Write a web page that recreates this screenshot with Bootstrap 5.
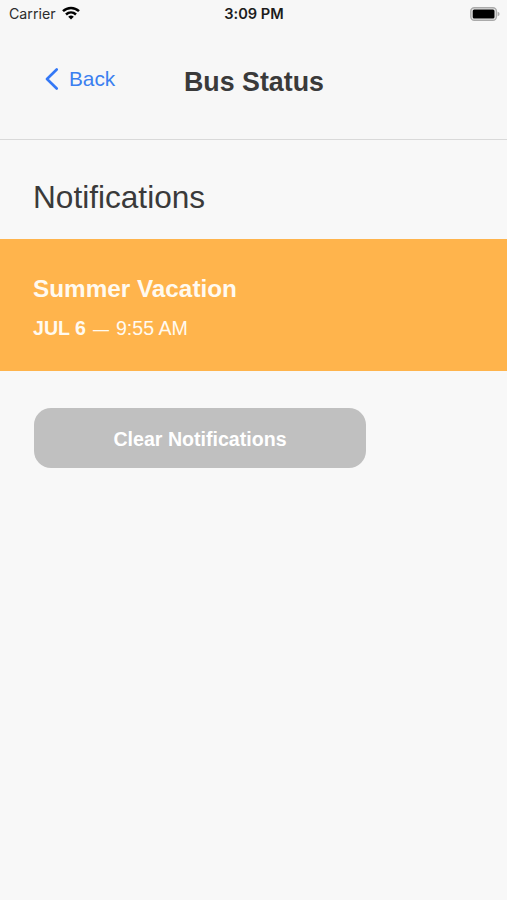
<!DOCTYPE html>
<html lang="en">
<head>
<meta charset="utf-8">
<meta name="viewport" content="width=device-width, initial-scale=1">
<title>Bus Status</title>
<link href="https://cdn.jsdelivr.net/npm/bootstrap@5.3.0/dist/css/bootstrap.min.css" rel="stylesheet">
<style>
  body { background: #f8f8f8; color: #3a3a3a; font-family: "Liberation Sans", Arial, sans-serif; font-variant-ligatures: none; min-height: 100vh; }
  .app-head { height: 140px; background: #f7f7f7; border-bottom: 1px solid #d9d9d9; }
  .status-bar { height: 28px; padding: 0 7px 0 9px; font-family: Inter, sans-serif; color: #1c1c1c; display: grid; grid-template-columns: 1fr auto 1fr; }
  .carrier { font-size: 14.2px; color: #2c2c2c; }
  .signal { margin-left: 6px; margin-top: -2px; }
  .clock { font-size: 14.6px; font-weight: 600; padding-top: 2px; margin-left: -1px; }
  .title-bar { padding: 35px 0 0 45px; }
  .back-link { width: 139px; height: 32px; font-size: 20.8px; line-height: 32px; color: #3b7ff0; }
  .back-label { margin-left: 10px; }
  .page-title { font-size: 26.8px; line-height: 38px; }
  .section-title { font-size: 31.6px; line-height: 40px; padding: 37px 33px 22px; }
  .notice { height: 132px; background: #ffb44c; color: #fffaf0; padding: 35px 33px 0; }
  .notice-title { font-size: 24.3px; line-height: 30px; }
  .notice-time { font-size: 19.6px; line-height: 26px; margin-top: 11px; }
  .dash { display: inline-block; width: 19px; text-align: center; font-size: 16px; }
  .clear-btn, .clear-btn:hover { width: 332px; height: 60px; margin: 37px 0 0 34px; padding-top: 9px; border: 0; border-radius: 17px; background: #c0c0c0; color: #fff; font-size: 19.6px; }
</style>
</head>
<body>
<header class="app-head">
  <div class="status-bar align-items-center">
    <div class="d-flex align-items-center">
      <span class="carrier">Carrier</span>
      <svg class="signal" width="18" height="14" viewBox="0 0 18 14" fill="none" stroke="#000" stroke-width="2.5" aria-hidden="true">
        <path d="M1 5.2C5.6.9 12.400 .9 17 5.200M4 8.500C6.900 5.800 11.100 5.800 14 8.500"/>
        <path d="M6.200 10.700Q9 8.400 11.800 10.700L9 13.600Z" fill="#000" stroke="none"/>
      </svg>
    </div>
    <span class="clock">3:09 PM</span>
    <svg class="ms-auto" width="30" height="14" viewBox="0 0 30 14" aria-hidden="true">
      <rect x=".8" y=".8" width="25.600" height="12.400" rx="3.500" fill="#e8e8e8" stroke="#aaa" stroke-width="1.400"/>
      <rect x="2.700" y="2.600" width="21.800" height="8.900" rx="1.500" fill="#000"/>
      <path d="M27.600 4.700q2 .6 2 2.300t-2 2.300z" fill="#aaa"/>
    </svg>
  </div>
  <nav class="title-bar d-flex align-items-start">
    <a class="back-link d-flex align-items-center text-decoration-none" href="#">
      <svg width="14" height="22" viewBox="0 0 14 22" fill="none" stroke="#3478f6" stroke-width="2.600" stroke-linecap="round" stroke-linejoin="round" aria-hidden="true"><path d="M11.700 1.500 2 11l9.700 9.500"/></svg>
      <span class="back-label">Back</span>
    </a>
    <h1 class="page-title fw-bold mb-0">Bus Status</h1>
  </nav>
</header>
<main>
  <h2 class="section-title fw-normal mb-0">Notifications</h2>
  <article class="notice">
    <h3 class="notice-title fw-bold mb-0">Summer Vacation</h3>
    <p class="notice-time mb-0"><strong>JUL 6</strong> <span class="dash">—</span> 9:55 AM</p>
  </article>
  <button class="btn clear-btn fw-bold d-block" type="button">Clear Notifications</button>
</main>
<script src="https://cdn.jsdelivr.net/npm/bootstrap@5.3.0/dist/js/bootstrap.bundle.min.js"></script>
</body>
</html>
